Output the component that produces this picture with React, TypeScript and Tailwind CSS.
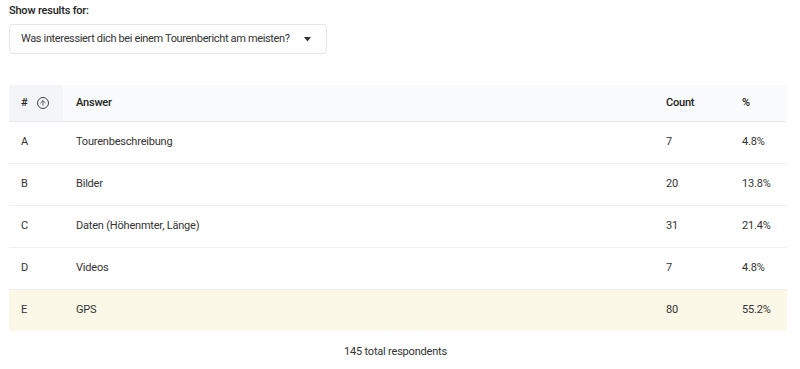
import { ArrowUp } from "lucide-react";

const rows = [
  { key: "A", answer: "Tourenbeschreibung", count: 7, pct: "4.8%" },
  { key: "B", answer: "Bilder", count: 20, pct: "13.8%" },
  { key: "C", answer: "Daten (Höhenmter, Länge)", count: 31, pct: "21.4%" },
  { key: "D", answer: "Videos", count: 7, pct: "4.8%" },
  { key: "E", answer: "GPS", count: 80, pct: "55.2%", top: true },
];

export default function App() {
  return (
    <div className="min-h-[369px] bg-white px-[9px] pt-[4px] font-['Roboto',sans-serif] text-[#333] tracking-[-0.2px]">
      <div className="text-[11px] font-medium leading-[14px] text-[#222]">Show results for:</div>
      <button className="mt-[6px] flex h-[30px] w-[318px] items-center justify-between rounded-[4px] border border-[#e3e5ea] pl-[11px] pr-[15px] text-left text-[11px] tracking-[-0.35px] text-[#333]">
        <span className="whitespace-nowrap">Was interessiert dich bei einem Tourenbericht am meisten?</span>
        <svg width="7" height="5" viewBox="0 0 7 5">
          <path d="M0 0h7L3.5 4.5z" fill="#333" />
        </svg>
      </button>

      <table className="mt-[31px] w-[778px] border-collapse text-[11px]">
        <thead>
          <tr className="h-[36px] border-b border-[#e6e8ee] bg-[#fafbfc] text-left font-medium text-[#222]">
            <th className="w-[54px] bg-[#f4f5f8] pl-[12px] font-medium">
              <span className="flex items-center gap-[10px]">
                #
                <span className="flex h-[12px] w-[12px] items-center justify-center rounded-full border border-[#444]">
                  <ArrowUp size={8} strokeWidth={2} />
                </span>
              </span>
            </th>
            <th className="pl-[13px] font-medium">Answer</th>
            <th className="w-[76px] font-medium">Count</th>
            <th className="w-[45px] font-medium">%</th>
          </tr>
        </thead>
        <tbody>
          {rows.map((r) => (
            <tr
              key={r.key}
              className={`h-[42px] ${r.top ? "bg-[#fcf8e7]" : "border-b border-[#eef0f3]"}`}
            >
              <td className="pl-[12px]">{r.key}</td>
              <td className="pl-[13px]">{r.answer}</td>
              <td>{r.count}</td>
              <td>{r.pct}</td>
            </tr>
          ))}
        </tbody>
      </table>

      <div className="-ml-[9px] mt-[13px] text-center text-[11px] text-[#333]">145 total respondents</div>
    </div>
  );
}
